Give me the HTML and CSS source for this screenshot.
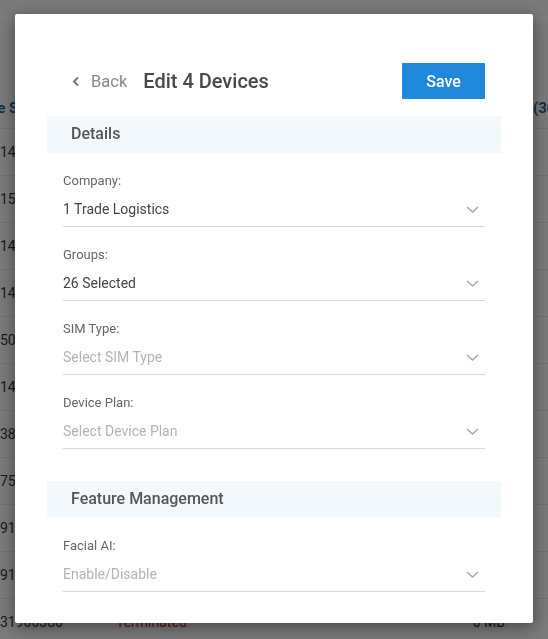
FILE: index.html
```html
<!DOCTYPE html>
<html lang="en">
<head>
    <meta charset="UTF-8">
    <meta name="viewport" content="width=device-width, initial-scale=1.0">
    <title>Edit Devices</title>
    <link rel="stylesheet" href="styles.css">
</head>
<body>

    <!-- device list behind the dialog -->
    <div class="page">
        <div class="topbar"></div>
        <div class="devices">
            <div class="row head">
                <span class="col-id"><span class="head-first">Device SN</span></span>
                <span class="col-status"></span>
                <span class="col-usage">Usage (30 Days)</span>
            </div>
            <div class="row"><span class="col-id">14502361</span><span class="col-status"></span><span class="col-usage"></span></div>
            <div class="row"><span class="col-id">15230418</span><span class="col-status"></span><span class="col-usage"></span></div>
            <div class="row"><span class="col-id">14670925</span><span class="col-status"></span><span class="col-usage"></span></div>
            <div class="row"><span class="col-id">14893370</span><span class="col-status"></span><span class="col-usage"></span></div>
            <div class="row"><span class="col-id">50521847</span><span class="col-status"></span><span class="col-usage"></span></div>
            <div class="row"><span class="col-id">14630092</span><span class="col-status"></span><span class="col-usage"></span></div>
            <div class="row"><span class="col-id">38306715</span><span class="col-status"></span><span class="col-usage"></span></div>
            <div class="row"><span class="col-id">75044120</span><span class="col-status"></span><span class="col-usage"></span></div>
            <div class="row"><span class="col-id">91905263</span><span class="col-status"></span><span class="col-usage"></span></div>
            <div class="row"><span class="col-id">91938804</span><span class="col-status"></span><span class="col-usage"></span></div>
            <div class="row"><span class="col-id">31900380</span><span class="col-status terminated">Terminated</span><span class="col-usage">0 MB</span></div>
        </div>
    </div>

    <div class="backdrop">
        <div class="modal">
            <div class="modal-header">
                <a class="back">
                    <svg width="8" height="11" viewBox="0 0 8 11"><polyline points="6,1.5 2,5.5 6,9.5" fill="none" stroke="#777" stroke-width="2"/></svg>
                    Back
                </a>
                <h2 class="title">Edit 4 Devices</h2>
                <button class="save">Save</button>
            </div>

            <div class="section">Details</div>

            <div class="field">
                <label>Company:</label>
                <div class="select">
                    <span class="value">1 Trade Logistics</span>
                    <svg class="caret" width="13" height="7" viewBox="0 0 13 7"><polyline points="1,1 6.5,6 12,1" fill="none" stroke="#a8a8a8" stroke-width="1.5"/></svg>
                </div>
            </div>
            <div class="field">
                <label>Groups:</label>
                <div class="select">
                    <span class="value">26 Selected</span>
                    <svg class="caret" width="13" height="7" viewBox="0 0 13 7"><polyline points="1,1 6.5,6 12,1" fill="none" stroke="#a8a8a8" stroke-width="1.5"/></svg>
                </div>
            </div>
            <div class="field">
                <label>SIM Type:</label>
                <div class="select">
                    <span class="value placeholder">Select SIM Type</span>
                    <svg class="caret" width="13" height="7" viewBox="0 0 13 7"><polyline points="1,1 6.5,6 12,1" fill="none" stroke="#a8a8a8" stroke-width="1.5"/></svg>
                </div>
            </div>
            <div class="field">
                <label>Device Plan:</label>
                <div class="select">
                    <span class="value placeholder">Select Device Plan</span>
                    <svg class="caret" width="13" height="7" viewBox="0 0 13 7"><polyline points="1,1 6.5,6 12,1" fill="none" stroke="#a8a8a8" stroke-width="1.5"/></svg>
                </div>
            </div>

            <div class="section features">Feature Management</div>

            <div class="field">
                <label>Facial AI:</label>
                <div class="select">
                    <span class="value placeholder">Enable/Disable</span>
                    <svg class="caret" width="13" height="7" viewBox="0 0 13 7"><polyline points="1,1 6.5,6 12,1" fill="none" stroke="#a8a8a8" stroke-width="1.5"/></svg>
                </div>
            </div>
        </div>
    </div>

</body>
</html>
```

FILE: styles.css
```css
body {
    margin: 0;
    font-family: Roboto, Arial, sans-serif;
    background: #f5f5f5;
    color: #333;
    overflow: hidden;
}

/* list page */
.topbar {
    height: 17px;
    border-bottom: 1px solid #fcfcfc;
    background: #f2f2f2;
}
.devices {
    margin-top: 70px;
}
.row {
    display: flex;
    height: 46px;
    align-items: center;
    border-bottom: 1px solid #e2e2e2;
    font-size: 14px;
    white-space: nowrap;
}
.row.head {
    height: 40px;
    color: #1e5c9a;
    font-weight: 700;
    font-size: 15px;
}
.head-first {
    margin-left: -40px;
}
.col-id {
    width: 116px;
}
.col-status {
    flex: 1;
}
.col-usage {
    width: 60px;
    padding-right: 43px;
    text-align: right;
}
.row.head .col-usage {
    width: 61px;
    padding-right: 0;
    text-align: left;
}
.terminated {
    color: #c62828;
}

/* dialog */
.backdrop {
    position: fixed;
    inset: 0;
    background: rgba(0, 0, 0, 0.5);
    padding: 14px 0 0 15px;
}
.modal {
    width: 518px;
    height: 609px;
    box-sizing: border-box;
    padding: 49px 32px 0;
    background: #fff;
    border-radius: 2px;
    box-shadow: 0 4px 16px rgba(0, 0, 0, 0.45);
    overflow: hidden;
}
.modal-header {
    display: flex;
    align-items: center;
    height: 36px;
    margin: 0 16px 17px;
}
.back {
    display: flex;
    align-items: center;
    gap: 11px;
    margin-left: 9px;
    font-size: 16.5px;
    color: #888;
    cursor: pointer;
}
.title {
    flex: 1;
    margin: 0 0 0 16px;
    font-size: 20px;
    font-weight: 500;
    color: #484848;
}
.save {
    width: 83px;
    height: 36px;
    border: 0;
    border-radius: 1px;
    background: #2088dc;
    color: #fff;
    font-family: inherit;
    font-size: 16px;
    font-weight: 500;
    cursor: pointer;
}

.section {
    height: 37px;
    line-height: 36px;
    padding-left: 24px;
    background: #f3f8fc;
    font-size: 16px;
    font-weight: 500;
    color: #555;
}
.section.features {
    margin-top: 32px;
}

.field {
    margin: 0 16px;
    padding-top: 20px;
}
.field label {
    display: block;
    font-size: 13px;
    line-height: 16px;
    color: #666;
}
.select {
    display: flex;
    align-items: center;
    margin-top: 10px;
    padding-bottom: 7px;
    border-bottom: 1px solid #d6d6d6;
}
.value {
    flex: 1;
    font-size: 14px;
    line-height: 20px;
    color: #444;
}
.value.placeholder {
    color: #b3b3b3;
}
.caret {
    margin-right: 6px;
}
```
